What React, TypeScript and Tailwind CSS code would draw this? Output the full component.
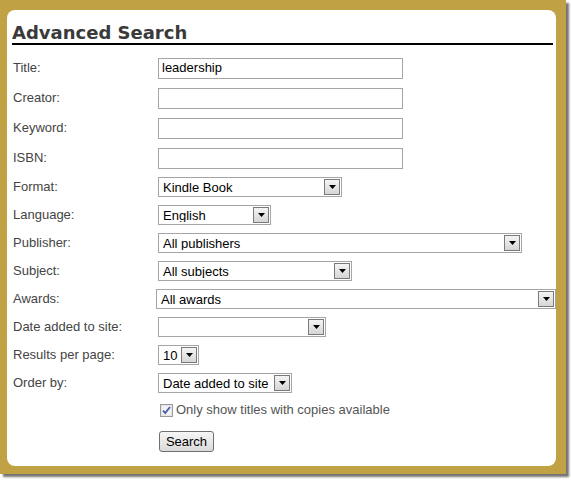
import React from 'react';

const labelFont = { fontFamily: '"Liberation Sans", Arial, sans-serif' };

function Arrow() {
  return (
    <span className="flex h-[16px] w-[16px] shrink-0 items-center justify-center border border-[#7a7a7a] bg-gradient-to-b from-[#f4f4f4] to-[#d6d6d6]">
      <svg width="7" height="4" viewBox="0 0 7 4">
        <path d="M0 0h7L3.5 4z" fill="#000" />
      </svg>
    </span>
  );
}

function FakeSelect({ value, width }: { value: string; width: number }) {
  return (
    <div
      className="flex h-[20px] items-center border border-[#a5a5a5] bg-white pl-[4px] pr-[1px] text-[13px] text-black"
      style={{ width }}
    >
      <span className="flex-1 truncate leading-none">{value}</span>
      <Arrow />
    </div>
  );
}

function TextBox({ value }: { value?: string }) {
  return (
    <div className="flex h-[21px] w-[245px] items-center border border-[#a5a5a5] bg-white px-[3px] text-[13px] text-black">
      {value}
    </div>
  );
}

function Row({ label, h, children, shift = 0 }: { label: string; h: number; children: React.ReactNode; shift?: number }) {
  return (
    <div className="flex items-center" style={{ height: h }}>
      <div className="w-[145px] shrink-0 text-[13px] text-[#444]">{label}</div>
      <div style={{ marginLeft: shift }}>{children}</div>
    </div>
  );
}

export default function App() {
  return (
    <div className="h-[481px] w-[571px] bg-white" style={labelFont}>
      <div className="h-[474px] w-[566px] bg-[#c0a143] pb-[8px] pl-[7px] pr-[10px] pt-[10px] shadow-[3px_3px_2px_rgba(0,0,0,0.55)]">
        <div className="h-[456px] rounded-[8px] bg-white">
          <div className="mr-[3px] ml-[5px] border-b-2 border-black pt-[12px]">
            <h1
              className="text-[18px] font-bold leading-[21px] text-[#3a3a3a]"
              style={{ fontFamily: '"DejaVu Sans", Verdana, sans-serif' }}
            >
              Advanced Search
            </h1>
          </div>
          <div className="pl-[6px] pt-[8px]">
            <Row label="Title:" h={30}><TextBox value="leadership" /></Row>
            <Row label="Creator:" h={30}><TextBox /></Row>
            <Row label="Keyword:" h={30}><TextBox /></Row>
            <Row label="ISBN:" h={30}><TextBox /></Row>
            <Row label="Format:" h={28}><FakeSelect value="Kindle Book" width={184} /></Row>
            <Row label="Language:" h={28}><FakeSelect value="English" width={113} /></Row>
            <Row label="Publisher:" h={28}><FakeSelect value="All publishers" width={364} /></Row>
            <Row label="Subject:" h={28}><FakeSelect value="All subjects" width={194} /></Row>
            <Row label="Awards:" h={28} shift={-2}><FakeSelect value="All awards" width={400} /></Row>
            <Row label="Date added to site:" h={28}><FakeSelect value="" width={168} /></Row>
            <Row label="Results per page:" h={28}><FakeSelect value="10" width={41} /></Row>
            <Row label="Order by:" h={28}><FakeSelect value="Date added to site" width={134} /></Row>
            <div className="flex h-[26px] items-center pl-[147px]">
              <svg width="13" height="13" viewBox="0 0 13 13" className="shrink-0">
                <rect x="0.5" y="0.5" width="12" height="12" fill="#e4e4e4" stroke="#9a9a9a" />
                <rect x="2" y="2" width="9" height="9" fill="#f2f2f2" />
                <path d="M3 6.5l2.2 2.5L10 3" fill="none" stroke="#4a5aa8" strokeWidth="1.8" />
              </svg>
              <span className="ml-[3px] text-[13px] text-[#555]">Only show titles with copies available</span>
            </div>
            <div className="flex h-[36px] items-center pl-[146px]">
              <button className="h-[21px] w-[55px] rounded-[3px] border border-[#707070] bg-gradient-to-b from-[#f6f6f6] to-[#dadada] text-[13px] leading-none text-black">
                Search
              </button>
            </div>
          </div>
        </div>
      </div>
    </div>
  );
}
